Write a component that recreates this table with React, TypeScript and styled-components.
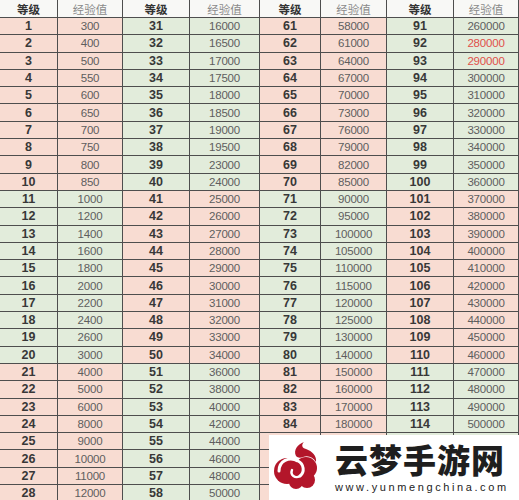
import styled, { createGlobalStyle } from 'styled-components';

const GlobalStyle = createGlobalStyle`
	html, body {
		margin: 0;
		padding: 0;
		overflow: hidden;
		background: #fff;
	}
`;

const groups: number[][] = [
	[300, 400, 500, 550, 600, 650, 700, 750, 800, 850, 1000, 1200, 1400, 1600, 1800, 2000, 2200, 2400, 2600, 3000, 4000, 5000, 6000, 8000, 9000, 10000, 11000, 12000],
	[16000, 16500, 17000, 17500, 18000, 18500, 19000, 19500, 23000, 24000, 25000, 26000, 27000, 28000, 29000, 30000, 31000, 32000, 33000, 34000, 36000, 38000, 40000, 42000, 44000, 46000, 48000, 50000],
	[58000, 61000, 64000, 67000, 70000, 73000, 76000, 79000, 82000, 85000, 90000, 95000, 100000, 105000, 110000, 115000, 120000, 125000, 130000, 140000, 150000, 160000, 170000, 180000, 190000, 200000, 210000, 220000],
	[260000, 280000, 290000, 300000, 310000, 320000, 330000, 340000, 350000, 360000, 370000, 380000, 390000, 400000, 410000, 420000, 430000, 440000, 450000, 460000, 470000, 480000, 490000, 500000, 510000, 520000, 530000, 540000],
];

const redLevels = [92, 93];

// rows hidden behind the logo card (last two column pairs)
const coveredFrom = 24;

type Tone = 'pink' | 'green';

const tones: Record<Tone, string> = {
	pink: '#f8dcd2',
	green: '#e2ecdb',
};

const Page = styled.div`
	position: relative;
	width: 519px;
	height: 500px;
	overflow: hidden;
	background: #fff;
`;

const Grid = styled.div`
	display: grid;
	grid-template-columns: 58px 65px 67px 70px 61px 66px 67px 65px;
	grid-template-rows: 18px;
	grid-auto-rows: 17.3px;
`;

const Cell = styled.div<{ $tone?: Tone }>`
	box-sizing: border-box;
	display: flex;
	align-items: center;
	justify-content: center;
	border-right: 1px solid #4e4e4e;
	border-bottom: 1px solid #4e4e4e;
	background: ${({ $tone }) => ($tone ? tones[$tone] : '#f8f8f6')};
	white-space: nowrap;
	overflow: hidden;
`;

const HeadLevel = styled(Cell)`
	font-family: 'Noto Sans CJK SC', sans-serif;
	font-weight: 700;
	font-size: 11.5px;
	color: #333;
`;

const HeadExp = styled(Cell)`
	font-family: 'Noto Sans CJK SC', sans-serif;
	font-size: 11.5px;
	color: #8a8a8a;
`;

const LevelCell = styled(Cell)`
	font-family: 'Liberation Sans', Arial, sans-serif;
	font-weight: 700;
	font-size: 12.5px;
	color: #383838;
`;

const ExpCell = styled(Cell)<{ $red?: boolean }>`
	font-family: 'Liberation Sans', Arial, sans-serif;
	font-size: 11.5px;
	letter-spacing: -0.2px;
	color: ${({ $red }) => ($red ? '#e0504a' : '#5e5e5e')};
`;

const LogoBox = styled.div`
	position: absolute;
	left: 269px;
	top: 435px;
	width: 250px;
	height: 65px;
	background: #fff;
	display: flex;
	align-items: flex-start;
	gap: 14px;
	padding: 6px 0 0 4px;
	box-sizing: border-box;
`;

const LogoText = styled.div`
	display: flex;
	flex-direction: column;
	gap: 5px;
	padding-top: 1px;
`;

const Brand = styled.div`
	font-family: 'Noto Sans CJK SC', sans-serif;
	font-weight: 900;
	font-size: 33px;
	line-height: 34px;
	letter-spacing: 1px;
	color: #1e1e1e;
`;

const Url = styled.div`
	font-family: 'Liberation Sans', Arial, sans-serif;
	font-size: 11px;
	line-height: 12px;
	letter-spacing: 2.6px;
	color: #222;
`;

const LogoMark = () => (
	<svg width="48" height="48" viewBox="0 0 48 48">
		<g fill="#b3162a">
			<path d="M23 15 C20 9 25 3 31 1 C28 4 29 7 33 8 C39 10 44 15 43 21 C40 16 35 14 30 16 C27 17 25 17 23 15 Z" />
			<circle cx="14" cy="30" r="13" />
			<circle cx="33" cy="27" r="11" />
			<circle cx="34" cy="39" r="8" />
			<circle cx="23" cy="41" r="7" />
		</g>
		<path d="M6 30 C6 20 16 15 25 20 C31 23 32 31 27 35" fill="none" stroke="#fff" strokeWidth="3" strokeLinecap="round" />
		<path d="M27 35 C22 38 17 34 19 29" fill="none" stroke="#fff" strokeWidth="2.4" strokeLinecap="round" />
		<circle cx="24" cy="30" r="2.6" fill="#b3162a" />
	</svg>
);

const rows = Array.from({ length: 28 }, (_, r) => r);

export default function App() {
	return (
		<Page>
			<GlobalStyle />
			<Grid>
				{groups.map((_, g) => [
					<HeadLevel key={`hl${g}`}>等级</HeadLevel>,
					<HeadExp key={`he${g}`}>经验值</HeadExp>,
				])}
				{rows.map((r) =>
					groups.map((values, g) => {
						const level = g * 30 + r + 1;
						const tone: Tone = Math.floor((level - 1) / 10) % 2 === 0 ? 'pink' : 'green';
						const hidden = g >= 2 && r >= coveredFrom;
						return [
							<LevelCell key={`l${level}`} $tone={tone}>
								{hidden ? '' : level}
							</LevelCell>,
							<ExpCell key={`e${level}`} $tone={tone} $red={redLevels.includes(level)}>
								{hidden ? '' : values[r]}
							</ExpCell>,
						];
					})
				)}
			</Grid>
			<LogoBox>
				<LogoMark />
				<LogoText>
					<Brand>云梦手游网</Brand>
					<Url>www.yunmengchina.com</Url>
				</LogoText>
			</LogoBox>
		</Page>
	);
}
